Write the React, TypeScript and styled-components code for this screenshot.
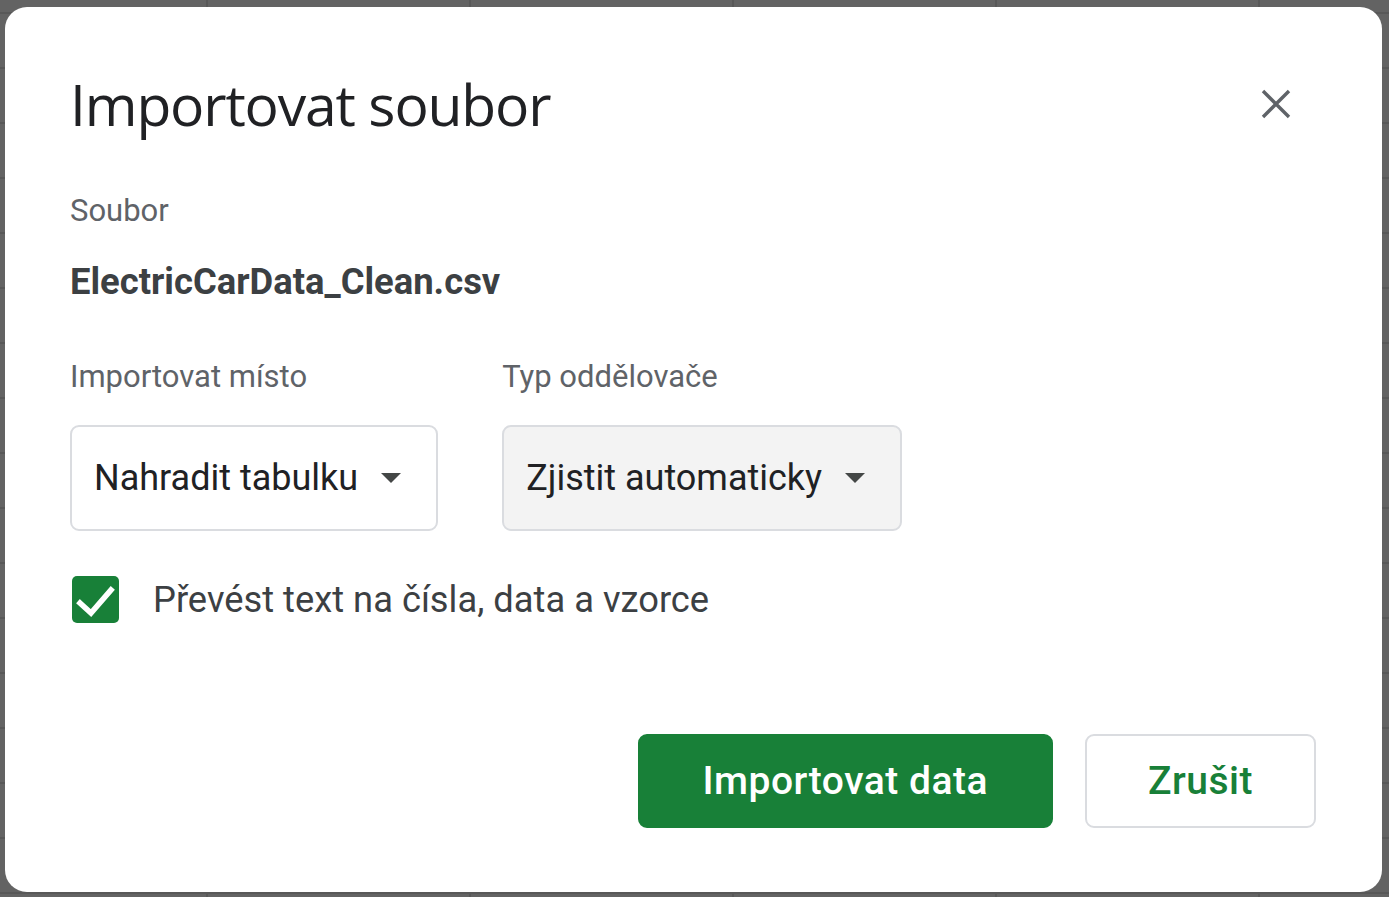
import React from "react";
import styled, { createGlobalStyle } from "styled-components";

const GlobalStyle = createGlobalStyle`
  html, body { margin: 0; padding: 0; }
  body { font-family: Roboto, "Liberation Sans", sans-serif; }
  * { box-sizing: border-box; }
`;

const Backdrop = styled.div`
  width: 1389px;
  height: 897px;
  padding: 7px 7px 5px 5px;
  background-color: #636363;
  background-image:
    linear-gradient(to right, transparent 206px, #585858 206px, #585858 208px, transparent 208px),
    linear-gradient(to bottom, transparent 12px, #585858 12px, #585858 14px, transparent 14px);
  background-size: 263px 100%, 100% 55px;
  display: flex;
  overflow: hidden;
`;

const Dialog = styled.div`
  width: 1377px;
  height: 885px;
  background: #ffffff;
  border-radius: 22px;
  padding: 63px 66px 64px 65px;
  display: flex;
  flex-direction: column;
`;

const TitleRow = styled.div`
  display: flex;
  align-items: center;
  justify-content: space-between;
  height: 68px;
`;

const Title = styled.h1`
  margin: 0;
  font-family: "Open Sans", "Liberation Sans", sans-serif;
  font-weight: 400;
  font-size: 57px;
  line-height: 68px;
  color: #202124;
  letter-spacing: -1.15px;
`;

const CloseButton = styled.button`
  width: 48px;
  height: 48px;
  margin-right: 16px;
  border: none;
  background: transparent;
  padding: 0;
  display: flex;
  align-items: center;
  justify-content: center;
  cursor: pointer;
`;

const Label = styled.div<{ $top: number }>`
  margin-top: ${(p) => p.$top}px;
  font-size: 31px;
  line-height: 40px;
  color: #5f6368;
`;

const FileName = styled.div`
  margin-top: 31px;
  font-size: 36.4px;
  line-height: 40px;
  font-weight: 700;
  color: #3c4043;
`;

const FieldsRow = styled.div`
  display: flex;
  gap: 64px;
  margin-top: 55px;
`;

const Field = styled.div`
  display: flex;
  flex-direction: column;
  align-items: flex-start;
`;

const Select = styled.div<{ $filled?: boolean }>`
  margin-top: 28px;
  height: 106px;
  display: inline-flex;
  align-items: center;
  gap: 23px;
  padding: 0 35px 0 22px;
  border: 2px solid #dadce0;
  border-radius: 9px;
  background: ${(p) => (p.$filled ? "#f3f3f3" : "#ffffff")};
  font-size: 36px;
  color: #202124;
`;

const Arrow = styled.span`
  width: 0;
  height: 0;
  border-left: 10px solid transparent;
  border-right: 10px solid transparent;
  border-top: 10px solid #444746;
`;

const CheckRow = styled.label`
  margin-top: 45px;
  display: flex;
  align-items: center;
  gap: 34px;
  padding-left: 2px;
  font-size: 36.3px;
  color: #3c4043;
`;

const CheckBox = styled.span`
  width: 47px;
  height: 47px;
  border-radius: 5px;
  background: #188038;
  display: flex;
  align-items: center;
  justify-content: center;
`;

const Actions = styled.div`
  margin-top: auto;
  display: flex;
  justify-content: flex-end;
  gap: 32px;
`;

const Button = styled.button<{ $primary?: boolean }>`
  height: 94px;
  padding: 0 ${(p) => (p.$primary ? 63 : 61)}px;
  border-radius: 9px;
  font-family: Roboto, "Liberation Sans", sans-serif;
  font-size: 39px;
  font-weight: 500;
  letter-spacing: 0.5px;
  cursor: pointer;
  border: 2px solid ${(p) => (p.$primary ? "#188038" : "#dadce0")};
  background: ${(p) => (p.$primary ? "#188038" : "#ffffff")};
  color: ${(p) => (p.$primary ? "#ffffff" : "#188038")};
`;

export default function App() {
  return (
    <>
      <GlobalStyle />
      <Backdrop>
        <Dialog>
          <TitleRow>
            <Title>Importovat soubor</Title>
            <CloseButton aria-label="Zavřít">
              <svg width="30" height="30" viewBox="0 0 30 30">
                <path d="M2 2 L28 28 M28 2 L2 28" stroke="#5f6368" strokeWidth="3.4" fill="none" />
              </svg>
            </CloseButton>
          </TitleRow>
          <Label $top={53}>Soubor</Label>
          <FileName>ElectricCarData_Clean.csv</FileName>
          <FieldsRow>
            <Field>
              <Label $top={0}>Importovat místo</Label>
              <Select>
                Nahradit tabulku
                <Arrow />
              </Select>
            </Field>
            <Field>
              <Label $top={0}>Typ oddělovače</Label>
              <Select $filled>
                Zjistit automaticky
                <Arrow />
              </Select>
            </Field>
          </FieldsRow>
          <CheckRow>
            <CheckBox>
              <svg width="47" height="47" viewBox="0 0 47 47">
                <path d="M8 27 L19 37 L39 14" stroke="#ffffff" strokeWidth="5.5" fill="none" strokeLinecap="square" />
              </svg>
            </CheckBox>
            Převést text na čísla, data a vzorce
          </CheckRow>
          <Actions>
            <Button $primary>Importovat data</Button>
            <Button>Zrušit</Button>
          </Actions>
        </Dialog>
      </Backdrop>
    </>
  );
}
